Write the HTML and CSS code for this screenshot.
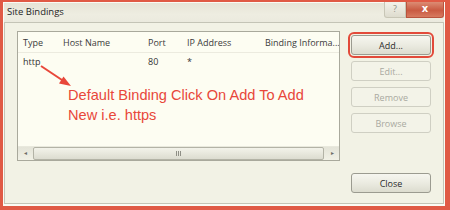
FILE: index.html
```html
<!DOCTYPE html>
<html lang="en">
<head>
    <meta charset="UTF-8">
    <title>Site Bindings</title>
    <link rel="stylesheet" href="styles.css">
</head>
<body>
    <div class="window">
        <div class="frame">
            <div class="titlebar">
                <span class="title">Site Bindings</span>
                <div class="caption-buttons">
                    <span class="cap-help">?</span>
                    <span class="cap-close">x</span>
                </div>
            </div>
            <div class="client">
                <div class="listbox">
                    <div class="row header">
                        <span>Type</span>
                        <span>Host Name</span>
                        <span>Port</span>
                        <span>IP Address</span>
                        <span>Binding Informa...</span>
                    </div>
                    <div class="row item">
                        <span>http</span>
                        <span></span>
                        <span>80</span>
                        <span>*</span>
                        <span></span>
                    </div>
                    <div class="note">Default Binding Click On Add To Add<br>New i.e. https</div>
                    <div class="hscroll">
                        <span class="arrow-btn">&#9666;</span>
                        <span class="thumb"><span class="grip"></span></span>
                        <span class="arrow-btn">&#9656;</span>
                    </div>
                    <!-- annotation arrow drawn over the list -->
                    <svg class="note-arrow" width="80" height="70" viewBox="0 0 80 70">
                        <line x1="23" y1="34" x2="47" y2="50" stroke="#e8473a" stroke-width="2"/>
                        <polygon points="53,54 45.5,44.5 41,51.5" fill="#e8473a"/>
                    </svg>
                </div>
                <div class="buttons">
                    <button class="btn highlighted">Add...</button>
                    <button class="btn" disabled>Edit...</button>
                    <button class="btn" disabled>Remove</button>
                    <button class="btn" disabled>Browse</button>
                    <button class="btn close">Close</button>
                </div>
            </div>
        </div>
    </div>
</body>
</html>
```

FILE: styles.css
```css
body {
    margin: 0;
    font-family: 'Open Sans', 'Noto Sans', sans-serif;
    font-size: 9px;
    color: #2b2b2b;
    background: #f2f2e5;
}
.window {
    width: 450px;
    height: 210px;
    box-sizing: border-box;
    border-style: solid;
    border-color: #e05a45;
    border-width: 2px 5px 4px 3px;
    display: flex;
}
.frame {
    flex: 1;
    display: flex;
    flex-direction: column;
    border: 1px solid #fbfbf4;
    border-bottom-width: 2px;
}
.titlebar {
    height: 19px;
    display: flex;
    justify-content: space-between;
    background: linear-gradient(180deg, #e6e4d6 0%, #eeede1 60%, #ebeade 100%);
}
.title {
    font-size: 9.5px;
    color: #1e1e1e;
    padding: 2px 0 0 3px;
}
.caption-buttons {
    display: flex;
    height: 16px;
    margin-top: -1px;
}
.cap-help {
    width: 20px;
    border: 1px solid #c8c6b6;
    border-top: none;
    border-radius: 0 0 0 3px;
    background: linear-gradient(180deg, #f3f2ea, #dedcce);
    color: #8f8f86;
    font-size: 9px;
    text-align: center;
    line-height: 14px;
}
.cap-close {
    width: 36px;
    border: 1px solid #b9543e;
    border-top: none;
    border-radius: 0 0 3px 0;
    background: linear-gradient(180deg, #dc8c74, #c95a42 55%, #d77a5f);
    color: #fff;
    font-family: 'DejaVu Sans', sans-serif;
    font-weight: bold;
    font-size: 10px;
    text-align: center;
    line-height: 13px;
}
.client {
    flex: 1;
    display: flex;
    gap: 11px;
    padding: 8px 11px 10px 12px;
    border: 1px solid #c4c4b6;
    background: #f2f2e5;
}
.listbox {
    position: relative;
    width: 323px;
    height: 130px;
    box-sizing: border-box;
    border: 1px solid #a9a99c;
    background: #fdfdf2;
    display: flex;
    flex-direction: column;
    overflow: hidden;
}
.row {
    display: grid;
    grid-template-columns: 40px 85px 39px 78px 1fr;
}
.row span {
    padding-left: 5px;
    white-space: nowrap;
    overflow: hidden;
}
.header {
    height: 21px;
    line-height: 22px;
    color: #3b3b3b;
    border-bottom: 1px solid #ecebdf;
    box-sizing: border-box;
}
.item {
    height: 18px;
    line-height: 18px;
    color: #333;
}
.note {
    flex: 1;
    margin: 14px 0 0 50px;
    font-family: 'Liberation Sans', Arial, sans-serif;
    font-size: 14.6px;
    line-height: 20px;
    color: #e8473a;
}
.note-arrow {
    position: absolute;
    left: 0;
    top: 0;
}
.hscroll {
    height: 13px;
    display: flex;
    align-items: stretch;
    background: linear-gradient(180deg, #e4e4d8, #f1f1e6);
    border-top: 1px solid #e9e9dd;
}
.arrow-btn {
    width: 14px;
    font-size: 6px;
    line-height: 13px;
    text-align: center;
    color: #6d6d66;
}
.thumb {
    flex: 1;
    margin: 0 1px;
    border: 1px solid #b3b3a6;
    border-radius: 2px;
    background: linear-gradient(180deg, #f3f3ea, #dcdcd0);
    display: flex;
    justify-content: center;
    align-items: center;
}
.grip {
    width: 6px;
    height: 5px;
    background: repeating-linear-gradient(90deg, #8f8f86 0 1px, transparent 1px 2px);
}
.buttons {
    display: flex;
    flex-direction: column;
    gap: 6px;
    padding-top: 4px;
}
.btn {
    width: 80px;
    height: 20px;
    padding: 0;
    font-family: 'Open Sans', 'Noto Sans', sans-serif;
    font-size: 9px;
    color: #2b2b2b;
    border: 1px solid #9b9b90;
    border-radius: 3px;
    background: linear-gradient(180deg, #f6f6ef 0%, #ebebe1 50%, #dcdccf 100%);
}
.btn:disabled {
    color: #a9a9a0;
    border-color: #cfcfc3;
    background: #f3f3e8;
}
.highlighted {
    outline: 2px solid #e24a3a;
    outline-offset: 1px;
}
.close {
    margin-top: auto;
}
```
